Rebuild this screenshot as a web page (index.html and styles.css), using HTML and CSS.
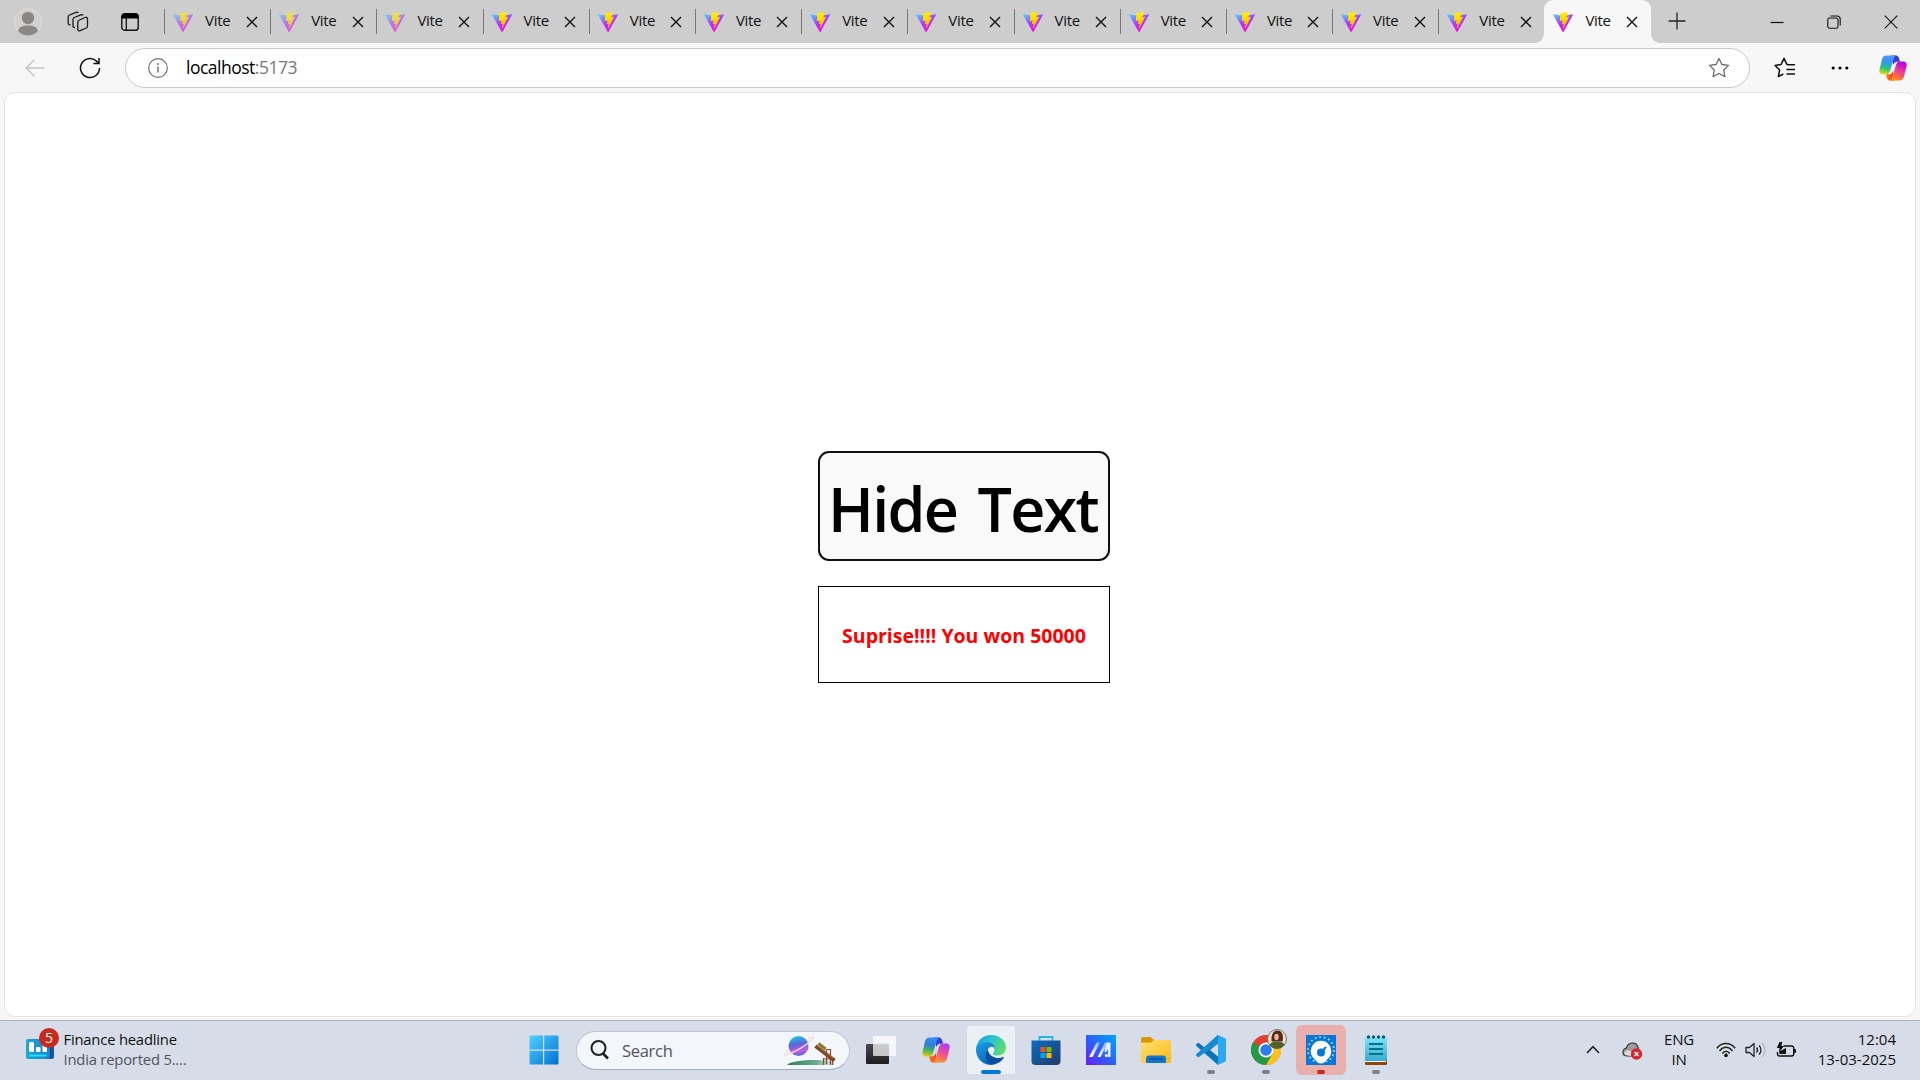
FILE: index.html
```
<!DOCTYPE html>
<html lang="en">
<head>
<meta charset="utf-8">
<title>Vite</title>
<link rel="stylesheet" href="styles.css">
</head>
<body>
<svg class="defs" aria-hidden="true">
  <defs>
    <linearGradient id="viteA" x1="0" y1="0.05" x2="0.6" y2="0.95"><stop offset="0" stop-color="#4fd0ff"/><stop offset="0.55" stop-color="#a83cff"/><stop offset="1" stop-color="#f400ee"/></linearGradient>
    <linearGradient id="viteB" x1="0.4" y1="0" x2="0.6" y2="1"><stop offset="0" stop-color="#fff000"/><stop offset="0.4" stop-color="#ffdc00"/><stop offset="1" stop-color="#ff9c00"/></linearGradient>
    <linearGradient id="copL" x1="0.3" y1="0" x2="0.1" y2="1"><stop offset="0" stop-color="#3a8ef4"/><stop offset="0.35" stop-color="#2a7fdc"/><stop offset="0.65" stop-color="#4fb35a"/><stop offset="1" stop-color="#f5d000"/></linearGradient>
    <linearGradient id="copVividL" x1="0.3" y1="0" x2="0.1" y2="1"><stop offset="0" stop-color="#4c94ff"/><stop offset="0.35" stop-color="#2f9ae8"/><stop offset="0.65" stop-color="#2fc47a"/><stop offset="1" stop-color="#ffe000"/></linearGradient>
    <linearGradient id="copR" x1="0.7" y1="0" x2="0.3" y2="1"><stop offset="0" stop-color="#a63ff0"/><stop offset="0.45" stop-color="#ee4a9c"/><stop offset="1" stop-color="#ff9a30"/></linearGradient>
    <linearGradient id="copVividR" x1="0.7" y1="0" x2="0.3" y2="1"><stop offset="0" stop-color="#b000f0"/><stop offset="0.45" stop-color="#f0389a"/><stop offset="1" stop-color="#ff9410"/></linearGradient>
    <linearGradient id="copT" x1="0" y1="0" x2="1" y2="1"><stop offset="0" stop-color="#1656d8"/><stop offset="1" stop-color="#5a20d0"/></linearGradient>
    <linearGradient id="copB" x1="0" y1="0" x2="1" y2="0"><stop offset="0" stop-color="#ff7a1a"/><stop offset="1" stop-color="#e8432a"/></linearGradient>
    <linearGradient id="win" x1="0" y1="0" x2="1" y2="1"><stop offset="0" stop-color="#4fd2ff"/><stop offset="1" stop-color="#006fd2"/></linearGradient>
    <linearGradient id="edgeTop" x1="0" y1="0.3" x2="1" y2="0.6"><stop offset="0" stop-color="#1b9de2"/><stop offset="0.45" stop-color="#2bc3d2"/><stop offset="1" stop-color="#62e060"/></linearGradient>
    <linearGradient id="edgeLeft" x1="0" y1="0" x2="0.6" y2="1"><stop offset="0" stop-color="#1b9de2"/><stop offset="1" stop-color="#0f64b8"/></linearGradient>
    <linearGradient id="store" x1="0" y1="0" x2="1" y2="1"><stop offset="0" stop-color="#0a6cc4"/><stop offset="1" stop-color="#243a66"/></linearGradient>
    <linearGradient id="asus" x1="0" y1="1" x2="1" y2="0"><stop offset="0" stop-color="#6a1cf4"/><stop offset="0.5" stop-color="#2b63fb"/><stop offset="1" stop-color="#00a6fa"/></linearGradient>
    <linearGradient id="slash" x1="0.6" y1="0" x2="0.4" y2="1"><stop offset="0" stop-color="#fff" stop-opacity=".5"/><stop offset="1" stop-color="#fff"/></linearGradient>
    <linearGradient id="folder" x1="0" y1="0" x2="1" y2="1"><stop offset="0" stop-color="#ffe173"/><stop offset="1" stop-color="#fcb813"/></linearGradient>
    <linearGradient id="note" x1="0" y1="0" x2="0" y2="1"><stop offset="0" stop-color="#7fe3f3"/><stop offset="1" stop-color="#36abd0"/></linearGradient>
    <linearGradient id="planet" x1="0.4" y1="0" x2="0.6" y2="1"><stop offset="0" stop-color="#14c8e8"/><stop offset="0.4" stop-color="#5b67d8"/><stop offset="0.75" stop-color="#c25be6"/><stop offset="1" stop-color="#4a6ac8"/></linearGradient>
    <linearGradient id="hill" x1="0" y1="0" x2="1" y2="0"><stop offset="0" stop-color="#2f7d5d"/><stop offset="0.6" stop-color="#6cab8c"/><stop offset="1" stop-color="#e0e8ea"/></linearGradient>
    <linearGradient id="dark" x1="0" y1="0" x2="0" y2="1"><stop offset="0" stop-color="#474747"/><stop offset="1" stop-color="#1f1f1f"/></linearGradient>
    <linearGradient id="board" x1="0" y1="0" x2="1" y2="0"><stop offset="0" stop-color="#22a6cf"/><stop offset="1" stop-color="#1684cf"/></linearGradient>
    <symbol id="vite" viewBox="0 0 256 257">
      <path fill="url(#viteA)" d="M255.153 37.938L134.897 252.976c-2.483 4.44-8.862 4.466-11.382.048L.875 37.958c-2.746-4.814 1.371-10.646 6.827-9.67l120.385 21.517a6.537 6.537 0 0 0 2.322-.004l117.867-21.483c5.438-.991 9.574 4.796 6.877 9.62Z"/>
      <path fill="url(#viteB)" d="M185.432.063L96.44 17.501a3.268 3.268 0 0 0-2.634 3.014l-5.474 92.456a3.268 3.268 0 0 0 3.997 3.378l24.777-5.718c2.318-.535 4.413 1.507 3.936 3.838l-7.361 36.047c-.495 2.426 1.782 4.5 4.151 3.78l15.304-4.649c2.372-.72 4.652 1.36 4.15 3.788l-11.698 56.621c-.732 3.542 3.979 5.473 5.943 2.437l1.313-2.028l72.516-144.72c1.215-2.423-.88-5.186-3.54-4.672l-25.505 4.922c-2.396.462-4.435-1.77-3.759-4.114l16.646-57.705c.677-2.35-1.37-4.583-3.769-4.113Z"/>
    </symbol>
    <symbol id="close" viewBox="0 0 12 12"><path d="M1 1l10 10M11 1L1 11" fill="none" stroke="#111" stroke-width="1.4"/></symbol>
    <symbol id="copilot" viewBox="0 0 28 26">
      <path fill="url(#copT)" d="M12 .5h5c2 0 2.600 1.400 3.100 3l1 3.300h-3.400c-1.800 0-2.800 1.400-3.300 3.200z"/>
      <path fill="url(#copB)" d="M16 25.500h-5c-2 0-2.600-1.400-3.100-3l-1-3.300h3.400c1.800 0 2.800-1.400 3.300-3.200z"/>
      <path class="left" d="M7.500.5h10.200c-2 .3-2.600 2-3.200 4l-3.300 11c-.8 2.600-1.900 3.900-4.300 3.900H3.700C.8 19.400-.1 17.200.5 14.600L3 4.500C3.700 2 4.900.5 7.500.5z"/>
      <path class="right" d="M20.500 25.500H10.300c2-.3 2.600-2 3.200-4l3.300-11c.8-2.600 1.900-3.900 4.300-3.900h3.200c2.900 0 3.800 2.200 3.200 4.800L25 21.500c-.7 2.500-1.900 4-4.500 4z"/>
    </symbol>
  </defs>
</svg>

<div class="screen">
  <header class="tabstrip">
    <div class="strip-tools">
      <svg width="28" height="28" viewBox="0 0 28 28"><circle cx="14" cy="14" r="13.300" fill="#d3d1cf" stroke="#e1dfdc"/><circle cx="14" cy="10" r="6.200" fill="#8b8784"/><path d="M4 23c1-4.300 5-5.500 10-5.500S23 18.700 24 23a13.400 13.400 0 0 1-20 0z" fill="#8b8784"/></svg>
      <svg class="workspaces" width="22" height="22" viewBox="0 0 22 22" fill="none" stroke="#1b1b1b" stroke-width="1.300"><path d="M11.500 9.500l6.500-3c1.500-.6 2.500 0 2.500 1.500v7c0 1-.5 1.600-1.300 2l-6 2.700c-1.500.6-2.400 0-2.400-1.400v-7c0-.9 0-1.400.7-1.800zM8 16.500c-1.200.2-2-.4-2-1.600V8.500c0-1 .4-1.600 1.300-2l6.500-2.700c1-.4 1.800-.1 2.200.6M3.500 13.800C2 14 1.200 13.300 1.200 12V6c0-1 .4-1.600 1.300-2L9 1.300c1-.4 1.800-.1 2.300.6"/></svg>
      <svg class="tabmenu" width="18" height="18" viewBox="0 0 18 18"><rect x=".8" y=".8" width="16.400" height="16.400" rx="2.800" fill="none" stroke="#111" stroke-width="1.400"/><path d="M.5 5.500V3.500a3 3 0 0 1 3-3h11a3 3 0 0 1 3 3v2z" fill="#000"/><path d="M5.300 5v12" stroke="#111" stroke-width="1.300"/></svg>
    </div>
    <nav class="tabs">
      <div class="tab idle"><svg class="fav"><use href="#vite"/></svg><span>Vite</span><svg class="x"><use href="#close"/></svg></div>
      <div class="tab idle"><svg class="fav"><use href="#vite"/></svg><span>Vite</span><svg class="x"><use href="#close"/></svg></div>
      <div class="tab idle"><svg class="fav"><use href="#vite"/></svg><span>Vite</span><svg class="x"><use href="#close"/></svg></div>
      <div class="tab"><svg class="fav"><use href="#vite"/></svg><span>Vite</span><svg class="x"><use href="#close"/></svg></div>
      <div class="tab"><svg class="fav"><use href="#vite"/></svg><span>Vite</span><svg class="x"><use href="#close"/></svg></div>
      <div class="tab"><svg class="fav"><use href="#vite"/></svg><span>Vite</span><svg class="x"><use href="#close"/></svg></div>
      <div class="tab"><svg class="fav"><use href="#vite"/></svg><span>Vite</span><svg class="x"><use href="#close"/></svg></div>
      <div class="tab"><svg class="fav"><use href="#vite"/></svg><span>Vite</span><svg class="x"><use href="#close"/></svg></div>
      <div class="tab"><svg class="fav"><use href="#vite"/></svg><span>Vite</span><svg class="x"><use href="#close"/></svg></div>
      <div class="tab"><svg class="fav"><use href="#vite"/></svg><span>Vite</span><svg class="x"><use href="#close"/></svg></div>
      <div class="tab"><svg class="fav"><use href="#vite"/></svg><span>Vite</span><svg class="x"><use href="#close"/></svg></div>
      <div class="tab"><svg class="fav"><use href="#vite"/></svg><span>Vite</span><svg class="x"><use href="#close"/></svg></div>
      <div class="tab"><svg class="fav"><use href="#vite"/></svg><span>Vite</span><svg class="x"><use href="#close"/></svg></div>
      <div class="tab active"><svg class="fav"><use href="#vite"/></svg><span>Vite</span><svg class="x"><use href="#close"/></svg></div>
    </nav>
    <svg class="newtab" width="18" height="18" viewBox="0 0 18 18"><path d="M9 .5v17M.5 9h17" stroke="#222" stroke-width="1.300"/></svg>
    <div class="window-controls">
      <svg width="14" height="14" viewBox="0 0 14 14"><path d="M.5 7.500h13" stroke="#111" stroke-width="1.200"/></svg>
      <svg width="14" height="14" viewBox="0 0 14 14" fill="none" stroke="#111" stroke-width="1.100"><rect x=".8" y="3" width="10.200" height="10.200" rx="1.800"/><path d="M3.500 1h6.500a3.200 3.200 0 0 1 3.200 3.200v6.300"/></svg>
      <svg width="14" height="14" viewBox="0 0 14 14"><path d="M.7.7l12.600 12.600M13.300.7L.7 13.300" stroke="#111" stroke-width="1.100"/></svg>
    </div>
  </header>

  <div class="toolbar">
    <svg class="back" width="20" height="18" viewBox="0 0 20 18" fill="none" stroke="#c4c4c4" stroke-width="1.300"><path d="M19.500 9H1M9.500.7L1 9l8.500 8.300"/></svg>
    <svg class="reload" width="22" height="22" viewBox="0 0 22 22" fill="none" stroke="#111" stroke-width="1.500"><path d="M20.500 11a9.500 9.500 0 1 1-3.200-7.100l2.400 2.500M20 1v5.600h-5.600"/></svg>
    <div class="address">
      <svg width="20" height="20" viewBox="0 0 20 20"><circle cx="10" cy="10" r="9.300" fill="none" stroke="#707070" stroke-width="1.200"/><path d="M10 8.600v6" stroke="#707070" stroke-width="1.500"/><circle cx="10" cy="5.900" r="1" fill="#707070"/></svg>
      <span class="url">localhost<i>:5173</i></span>
      <svg class="star" width="22" height="22" viewBox="0 0 22 22" fill="none" stroke="#6b6b6b" stroke-width="1.300" stroke-linejoin="round"><path d="M11 1.500l2.900 6 6.600.9-4.800 4.600 1.200 6.600-5.900-3.100-5.900 3.100 1.200-6.600-4.800-4.600 6.600-.9z"/></svg>
    </div>
    <svg class="favorites" width="22" height="22" viewBox="0 0 22 22" fill="none" stroke="#111" stroke-width="1.500" stroke-linejoin="round"><path d="M14 7.500l-1.100-.1-2.900-6-2.900 6-6 1L5.600 13l-1.200 6.600 4.900-2.600M13.500 7.800h7.500M12.500 12.500H21M12.500 17H21"/></svg>
    <svg class="more" width="18" height="4" viewBox="0 0 18 4"><circle cx="2.200" cy="2" r="1.600"/><circle cx="9" cy="2" r="1.600"/><circle cx="15.800" cy="2" r="1.600"/></svg>
    <svg class="copilot vivid" width="28" height="26"><use href="#copilot"/></svg>
  </div>

  <main class="page">
    <div class="stack">
      <button class="toggle">Hide Text</button>
      <div class="message">Suprise!!!! You won 50000</div>
    </div>
  </main>

  <footer class="taskbar">
    <div class="widgets">
      <div class="widget-icon">
        <svg width="28" height="20" viewBox="0 0 28 20"><rect x="20" width="8" height="20" rx="2.500" fill="#1557a6"/><rect x="23" y="2" width="1.500" height="17" fill="#082f5c"/><rect width="24" height="20" rx="2" fill="url(#board)"/><rect x="3" y="3" width="5" height="10" rx="1.500" fill="#fff"/><rect x="10" y="8" width="4.500" height="5" rx="1" fill="#fff"/><rect x="16.500" y="6" width="4.500" height="7" rx="1" fill="#fff"/><rect x="3" y="15.500" width="18" height="2" rx="1" fill="#17dff5"/></svg>
        <b class="badge">5</b>
      </div>
      <div class="headline"><span>Finance headline</span><small>India reported 5....</small></div>
    </div>

    <div class="apps">
      <svg class="start" width="30" height="30" viewBox="0 0 30 30" fill="url(#win)"><path d="M1.500.5H14v14H.5v-13a1 1 0 0 1 1-1zM15.200.5h13.300a1 1 0 0 1 1 1v13H15.200zM.5 15.700H14v13.800H1.500a1 1 0 0 1-1-1zM15.200 15.700h14.300v12.800a1 1 0 0 1-1 1H15.200z"/></svg>
      <div class="search">
        <svg width="19" height="20" viewBox="0 0 19 20" fill="none" stroke="#202020" stroke-width="2"><circle cx="8.500" cy="8" r="7"/><path d="M13 13.500l5 5" stroke-width="2.600"/></svg>
        <span>Search</span>
        <svg class="scene" width="54" height="34" viewBox="0 0 54 34">
          <path d="M4 32c4-5 38-7 48-2v2z" fill="url(#hill)"/>
          <circle cx="15.500" cy="13" r="10" fill="url(#planet)"/>
          <path d="M6.500 16.500C-1 22 .5 23.500 7 20.500c8-3.300 15-7.500 20-12C32.500 3.500 31 2.500 24.500 6" fill="none" stroke="#f5ddd4" stroke-width="1.400"/>
          <path d="M40.500 32V25m7 7V16.500h-4V31m-3-5h8M49.500 32v-6" fill="none" stroke="#8a4a38" stroke-width="1.200"/>
          <path d="M32.500 13l19 14.500" stroke="#7d4520" stroke-width="4"/><path d="M34 12.500l16 12.500" stroke="#b98045" stroke-width=".8"/>
          <path d="M35.500 10.500l7 5.500" stroke="#94702b" stroke-width="3"/>
        </svg>
      </div>
      <div class="app"><svg width="30" height="30" viewBox="0 0 30 30"><rect y="9" width="23" height="20" rx="1" fill="url(#dark)"/><rect x="7" y="1" width="23" height="20" rx="1" fill="#fff" fill-opacity=".72"/><path d="M7.500 9H23v12" fill="none" stroke="#d9d9d9" stroke-width=".6"/></svg></div>
      <div class="app"><svg width="28" height="26"><use href="#copilot"/></svg></div>
      <div class="app current"><svg width="30" height="30" viewBox="0 0 30 30">
        <path fill="url(#edgeTop)" d="M0 14C.8 5.500 7.200 0 15 0c9 0 15 6 15 12.500 0 5-3.700 8-8.500 8-4 0-5.300-1.300-4.200-2.600 2.800-3.600 0-8.400-6.300-8.400C6 9.500 2 12 0 14z"/>
        <path fill="url(#edgeLeft)" d="M0 15c0-4 4.500-7.700 10.500-7.700 5.500 0 8 3 8.200 5.500-2.500-2-7.200-1-7.200 4 0 6 5 10 10 9.700C17 29.600 14 30 12 29.700 5 28.400 0 22 0 15z"/>
        <path fill="#0d4f9e" d="M11.800 14.500C8 20 9.500 27 15 29.800c5.500 0 10.500-3 12.800-7.300.3-.6-.2-.8-.7-.5-5.300 2.700-14 .2-15.300-7.500z"/>
      </svg></div>
      <div class="app"><svg width="30" height="30" viewBox="0 0 30 30"><path d="M8.500 7V2h13v5" fill="none" stroke="#22b8ee" stroke-width="1.800"/><path d="M.5 5.500h29V26a4 4 0 0 1-4 4h-21a4 4 0 0 1-4-4z" fill="url(#store)"/><path fill="#f25022" d="M9.500 12h5v5h-5z"/><path fill="#7fba00" d="M15.500 12h5v5h-5z"/><path fill="#00a4ef" d="M9.500 18h5v5h-5z"/><path fill="#ffb900" d="M15.500 18h5v5h-5z"/></svg></div>
      <div class="app"><svg width="30" height="30" viewBox="0 0 30 30"><path d="M0 0h30v30H0z" fill="url(#asus)"/><path d="M3 22L10.500 7.500H14L6.500 22zM11.500 22L19 7.500h3L14.500 22z" fill="url(#slash)"/><path d="M21 7.500h3.500V22H22v-8l-2.500 4-1-2z" fill="#e6efff"/><circle cx="20.300" cy="20.500" r="1.500" fill="#fff"/></svg></div>
      <div class="app"><svg width="30" height="28" viewBox="0 0 30 28"><path d="M0 3a2 2 0 0 1 2-2h7.500L13 4v4H0z" fill="#dc9500"/><path d="M0 6.500h10L13 4h15.500A1.500 1.500 0 0 1 30 5.500v20A1.500 1.500 0 0 1 28.500 27h-27A1.500 1.500 0 0 1 0 25.500z" fill="url(#folder)"/><path d="M5 27v-4.500a3 3 0 0 1 3-3h14a3 3 0 0 1 3 3V27z" fill="#1277cc"/><path d="M8 23h14" stroke="#0a4c90" stroke-width="1.300"/></svg></div>
      <div class="app"><svg width="30" height="30" viewBox="0 0 30 30"><path fill="#0874bd" d="M22 0L8.500 12.500 3.200 8.300c-.7-.5-1.400-.4-2 .1L.4 9.300c-.5.500-.5 1.300 0 1.800L22 30v-8.500L14 15l8-6.500z"/><path fill="#168bd2" d="M22 0v8.500L3.200 21.800c-.7.5-1.400.4-2-.1l-.8-.9c-.5-.5-.5-1.300 0-1.800z"/><path fill="#2ba8f2" d="M22 0l7 3.300c.7.3 1 .8 1 1.500v20.500c0 .7-.3 1.200-1 1.500L22 30z"/></svg><i class="dot"></i></div>
      <div class="app"><svg width="30" height="30" viewBox="0 0 30 30"><circle cx="15" cy="15" r="15" fill="#e33e2f"/><path fill="#249a49" d="M2 7.500A15 15 0 0 0 15 30l6.500-11.300L15 15z"/><path fill="#fbc31e" d="M15 30A15 15 0 0 0 28 7.500H15l6.500 11.300z"/><circle cx="15" cy="15" r="7.500" fill="#fff"/><circle cx="15" cy="15" r="5.800" fill="#2f7ded"/></svg>
        <svg class="profile" width="20" height="20" viewBox="0 0 20 20"><circle cx="10" cy="10" r="9.500" fill="#eee1cc" stroke="#77766e"/><path d="M4.500 12.500C4 6 6 2 10 1.500c5 0 7 4.500 5.500 11z" fill="#572a1d"/><ellipse cx="9.500" cy="8" rx="2.200" ry="3.300" fill="#e9b796"/><path d="M2.500 16C4 13 7 12.500 10 12.500s6.500.5 7.500 3.500a9.500 9.500 0 0 1-15 0z" fill="#4e6228"/></svg><i class="dot"></i></div>
      <div class="app alert"><svg width="30" height="30" viewBox="0 0 30 30"><path d="M0 0h30v30H0z" fill="#0878d8"/><circle cx="15" cy="15" r="13" fill="none" stroke="#b9dcf8" stroke-width="1.700" stroke-dasharray="1.700 2.850"/><path d="M6 27h18v3H6z" fill="#0878d8"/><path d="M9 24.500A10.300 10.300 0 1 1 21 24.500c-2 3-4 4-6 4s-4-1-6-4z" fill="#fff"/><circle cx="15" cy="17.500" r="4" fill="#0878d8"/><path d="M15 17.500l5-5.500" stroke="#0878d8" stroke-width="2"/></svg><i class="dot"></i></div>
      <div class="app"><svg width="22" height="30" viewBox="0 0 22 30"><rect y="23" width="22" height="7" rx="1.500" fill="#914408"/><path d="M0 2.500h22v21.500a2.500 2.500 0 0 1-2.500 2.500H0z" fill="url(#note)"/><path d="M0 26.500h21" stroke="#eefaff" stroke-width="1"/><g fill="#075b78"><circle cx="3.500" cy="2" r="1.700"/><circle cx="8.500" cy="2" r="1.700"/><circle cx="13.500" cy="2" r="1.700"/><circle cx="18.500" cy="2" r="1.700"/></g><path d="M4 9h14M4 14h14M4 19h14" stroke="#08708f" stroke-width="1.800"/></svg><i class="dot"></i></div>
    </div>

    <div class="tray">
      <svg class="chevron" width="14" height="9" viewBox="0 0 14 9"><path d="M1 8l6-6.300L13 8" fill="none" stroke="#222" stroke-width="1.600"/></svg>
      <svg class="cloud" width="21" height="18" viewBox="0 0 21 18"><path d="M5 14C2 14 1 12 1 10.300 1 8 2.500 6.500 4.300 6 5.500 2.500 8 1 10.500 1c3 0 5 2 5.500 4.500l1 3-5 5.500z" fill="#9c9c9c" stroke="#333" stroke-width="1.200"/><path d="M3 13c-2-4 3-6 7-3l-1 4z" fill="#dedede"/><circle cx="14.500" cy="12" r="5.700" fill="#d9232e"/><path d="M12.500 10l4 4m0-4l-4 4" stroke="#fff" stroke-width="1.300"/></svg>
      <div class="lang">ENG<br>IN</div>
      <svg class="wifi" width="20" height="16" viewBox="0 0 20 16" fill="none" stroke="#222" stroke-width="1.400"><path d="M.8 6.200C6-.1 14-.1 19.200 6.200M3.500 9c4-5 9-5 13 0M6.300 11.500c2.500-3 5-3 7.400 0"/><circle cx="10" cy="13.400" r="1.800" fill="#111" stroke="none"/></svg>
      <svg class="volume" width="21" height="16" viewBox="0 0 21 16" fill="none" stroke="#222" stroke-width="1.300"><path d="M1 5.500h3.500L9 1.500v13l-4.500-4H1z" stroke-linejoin="round"/><path d="M11.500 5.500c1.300 1.500 1.300 3.500 0 5M14 3.500c2.600 2.500 2.600 6.500 0 9"/><path d="M17 1c4 4 4 10 0 14" stroke="#b1b6bf"/></svg>
      <svg class="battery" width="21" height="16" viewBox="0 0 21 16"><path d="M7.500 4h8.200a2 2 0 0 1 2 2v6a2 2 0 0 1-2 2H3.500a2 2 0 0 1-2-2v-2" fill="none" stroke="#111" stroke-width="1.400"/><path d="M19 7c1.500 0 1.500 4 0 4h-1V7zM10 6v6H3.500V9.500zM3.500 0h2.800l-1 4H8l-5 6.500L3.500 6H.8z" fill="#111"/></svg>
      <div class="clock">12:04<br>13-03-2025</div>
    </div>
  </footer>
</div>
</body>
</html>
```
FILE: styles.css
```
* { box-sizing: border-box; }
body { margin: 0; font-family: "Open Sans", "Noto Sans", sans-serif; color: #111; background: #f7f7f7; }
svg { display: block; flex: none; }
.defs { position: absolute; width: 0; height: 0; }
.screen { width: 1920px; height: 1080px; display: flex; flex-direction: column; overflow: hidden; }

.tabstrip { height: 43px; background: #cdcdcd; display: flex; align-items: center; flex: none; }
.strip-tools { width: 164px; height: 43px; padding-left: 14px; display: flex; align-items: center; flex: none; }
.workspaces { margin-left: 25px; }
.tabmenu { margin-left: 32px; }
.tabs { display: flex; height: 43px; flex: none; }
.tab { width: 106.200px; height: 43px; display: flex; align-items: center; padding-left: 9px; background: linear-gradient(#777, #777) 0 9px / 1px 25px no-repeat; flex: none; }
.fav { width: 20px; height: 20px; margin-top: 1px; }
.idle .fav { opacity: .6; }
.tab span { width: 43px; margin-left: 12px; font-size: 15px; line-height: 20px; letter-spacing: -.3px; margin-top: -4px; }
.x { width: 12px; height: 12px; margin-top: 1px; margin-left: -2.500px; }
.tab.active { background: #f7f7f7; border-radius: 9px 9px 0 0; position: relative; }
.tab.active::before, .tab.active::after { content: ""; position: absolute; bottom: 0; width: 9px; height: 9px; }
.tab.active::before { left: -9px; background: radial-gradient(circle at 0 0, transparent 8.500px, #f7f7f7 9px); }
.tab.active::after { right: -9px; background: radial-gradient(circle at 100% 0, transparent 8.500px, #f7f7f7 9px); }
.newtab { margin-left: 17px; margin-top: -1px; }
.window-controls { margin-left: auto; display: flex; gap: 43px; padding-right: 22px; }

.toolbar { height: 49px; display: flex; align-items: center; flex: none; }
.back { margin-left: 25px; }
.reload { margin-left: 34px; }
.address { width: 1625px; height: 40px; margin-left: 24px; border: 1px solid #c9c9c9; border-radius: 20px; background: #fff; display: flex; align-items: center; padding: 0 19px 0 22px; }
.url { margin-left: 18px; margin-top: -2px; font-size: 17.500px; letter-spacing: -.5px; color: #000; }
.url i { font-style: normal; color: #777; }
.star { margin-left: auto; }
.favorites { margin-left: 24px; }
.more { margin-left: 35px; }
.copilot { margin-left: 30px; }
.left { fill: var(--copilot-left, url(#copL)); }
.right { fill: var(--copilot-right, url(#copR)); }
.vivid { --copilot-left: url(#copVividL); --copilot-right: url(#copVividR); }

.page { width: 1912px; height: 925px; margin: 0 0 0 4px; border: 1px solid #e4e4e4; border-radius: 11px; background: #fff; display: flex; justify-content: center; flex: none; }
.stack { width: 292px; margin-top: 358px; margin-left: 8px; display: flex; flex-direction: column; gap: 25px; }
.toggle { height: 110px; margin: 0; padding: 4px 0 0; border: 2px solid #111; border-radius: 11px; background: #f9f9f9; color: #000; font: 600 61px/1 "Open Sans", sans-serif; letter-spacing: -1.700px; word-spacing: 6px; white-space: nowrap; text-indent: -2px; }
.message { height: 97px; border: 1px solid #000; display: flex; align-items: center; justify-content: center; color: #f00; font-weight: 700; font-size: 19.500px; white-space: nowrap; padding-top: 1px; }

.taskbar { height: 60px; margin-top: 3px; border-top: 1px solid #aaaeb5; background: #d7dde8; display: grid; grid-template-columns: 529.500px 1fr auto; align-items: center; flex: none; }
.widgets { display: flex; align-items: center; padding-left: 26px; }
.widget-icon { position: relative; margin-top: -4px; }
.badge { position: absolute; left: 13px; top: -11px; width: 20px; height: 20px; border-radius: 50%; background: #c52a1c; color: #fff; font-size: 14px; font-weight: 400; line-height: 20px; text-align: center; }
.headline { display: flex; flex-direction: column; margin-left: 9.500px; font-size: 14.800px; line-height: 20px; letter-spacing: -.2px; margin-top: -4px; white-space: nowrap; }
.headline small { font-size: 14.800px; color: #50545c; }
.apps { display: flex; align-items: center; margin-top: -1px; }
.start { margin-left: -.5px; }
.search { width: 274px; height: 39px; margin: 0 3.500px 0 17px; border: 1px solid #bfc6d3; border-bottom-color: #a5abb8; border-radius: 20px; background: #f3f6fa; display: flex; align-items: center; padding: 0 12px 0 13px; }
.search span { margin-left: 13px; font-size: 16.500px; letter-spacing: -.3px; color: #50545b; }
.scene { margin-left: auto; }
.app { width: 50px; height: 50px; margin: 0 2.500px; border-radius: 6px; display: flex; align-items: center; justify-content: center; position: relative; flex: none; }
.current { background: linear-gradient(#ebeff6, #ebeff6) center / 48px 48px no-repeat; }
.current::after { content: ""; position: absolute; left: 15px; bottom: 1px; width: 20px; height: 4px; border-radius: 2px; background: #0078d4; }
.alert { background: #e8afad; }
.dot { position: absolute; left: 21px; bottom: 1px; width: 8px; height: 4px; border-radius: 2px; background: #7c8088; }
.alert .dot { background: #c52a1c; }
.profile { position: absolute; left: 26px; top: 4px; }
.tray { display: flex; align-items: center; padding-right: 24px; font-size: 15px; line-height: 20px; letter-spacing: -.2px; white-space: nowrap; margin-top: -2px; }
.cloud { margin-left: 22px; margin-top: 3px; }
.lang { width: 32px; margin-left: 20px; margin-top: -2px; text-align: center; }
.wifi { margin-left: 21px; }
.volume { margin-left: 9px; }
.battery { margin-left: 10px; }
.clock { width: 80px; margin-left: 19px; margin-top: -2px; text-align: right; letter-spacing: 0; }
```
